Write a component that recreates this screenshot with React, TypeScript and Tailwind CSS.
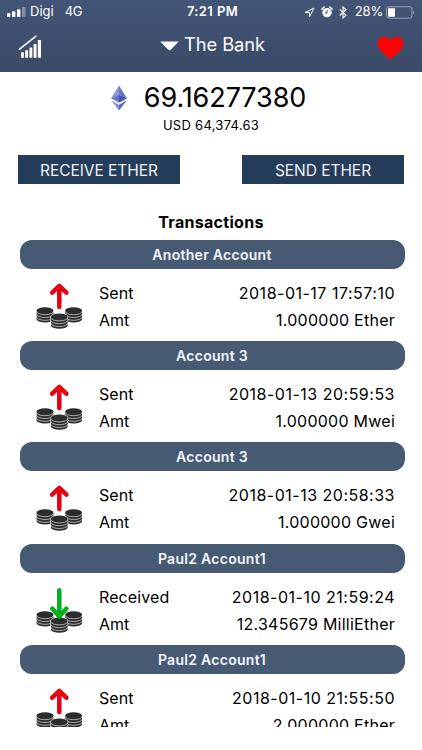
const transactions = [
  { account: 'Another Account', type: 'Sent', date: '2018-01-17 17:57:10', amount: '1.000000 Ether' },
  { account: 'Account 3', type: 'Sent', date: '2018-01-13 20:59:53', amount: '1.000000 Mwei' },
  { account: 'Account 3', type: 'Sent', date: '2018-01-13 20:58:33', amount: '1.000000 Gwei' },
  { account: 'Paul2 Account1', type: 'Received', date: '2018-01-10 21:59:24', amount: '12.345679 MilliEther' },
  { account: 'Paul2 Account1', type: 'Sent', date: '2018-01-10 21:55:50', amount: '2.000000 Ether' },
]

const StatusBar = () => {
  return (
    <div className="grid h-6 grid-cols-[1fr_auto_1fr] items-center pl-[7px] pr-[7px] text-[13px]">
      <div className="flex items-center">
        <svg width="19" height="10" viewBox="0 0 19 10" fill="#fff">
          <rect x="0" y="6" width="3.4" height="4" rx="0.8" />
          <rect x="5" y="4.3" width="3.4" height="5.7" rx="0.8" />
          <rect x="10" y="2.2" width="3.4" height="7.8" rx="0.8" />
          <rect x="15" y="0" width="3.4" height="10" rx="0.8" opacity="0.35" />
        </svg>
        <span className="ml-[4px]">Digi</span>
        <span className="ml-[11px] tracking-[-0.2px]">4G</span>
      </div>
      <span className="pl-[3px] font-semibold tracking-[0.4px]">7:21 PM</span>
      <div className="flex items-center justify-end">
        <svg width="11" height="11" viewBox="0 0 11 11" fill="none" stroke="#fff" strokeWidth="1">
          <path d="M10 1 L1 5.5 H5.4 V10 Z" strokeLinejoin="round" />
        </svg>
        <svg className="ml-[6px]" width="12" height="12" viewBox="0 0 12 12">
          <circle cx="6" cy="6.6" r="4.7" fill="#fff" />
          <path d="M0.8 3.3 L3.2 1 M11.2 3.3 L8.8 1" stroke="#fff" strokeWidth="1.5" strokeLinecap="round" />
          <path d="M6 4 V7 H4" fill="none" stroke="#40506f" strokeWidth="1" />
        </svg>
        <svg className="ml-[6px]" width="8" height="13" viewBox="0 0 8 13" fill="none" stroke="#fff" strokeWidth="1.1">
          <path d="M0.7 3.5 L7 9.3 L4 12 V1 L7 3.7 L0.7 9.5" />
        </svg>
        <span className="ml-[8px] tracking-[-0.2px]">28%</span>
        <svg className="ml-[3px]" width="29" height="13" viewBox="0 0 29 13">
          <rect x="0.5" y="0.7" width="25.5" height="11.5" rx="2.6" fill="none" stroke="#fff" strokeOpacity="0.45" />
          <rect x="2" y="2.2" width="7" height="8.5" rx="0.8" fill="#fff" />
          <path d="M27.2 4.6 Q29 6.5 27.2 8.5 Z" fill="#fff" fillOpacity="0.5" />
        </svg>
      </div>
    </div>
  )
}

const ChartIcon = () => {
  return (
    <svg width="24" height="24" viewBox="0 0 24 24" fill="#fff">
      <path d="M1.5 14.2 L18 1.2" stroke="#fff" strokeWidth="1.5" strokeLinecap="round" />
      <rect x="3" y="17.2" width="2.9" height="5.5" rx="0.5" />
      <rect x="7.2" y="15.2" width="2.9" height="7.5" rx="0.5" />
      <rect x="11.4" y="12.4" width="2.9" height="10.3" rx="0.5" />
      <rect x="15.6" y="9" width="2.9" height="13.7" rx="0.5" />
      <rect x="19.8" y="5" width="3.2" height="17.7" rx="0.5" />
    </svg>
  )
}

const HeartIcon = () => {
  return (
    <svg width="27" height="24" viewBox="0 0 27 24" fill="#fe0000">
      <path d="M13.5 23.3 C11.5 21.5 8.5 19.7 5 16 C2 13 0.5 10.5 0.5 7.2 C0.5 3.5 3.2 0.7 7 0.7 C9.8 0.7 12.2 1.8 13.5 4 C14.8 1.8 17.2 0.7 20 0.7 C23.8 0.7 26.5 3.5 26.5 7.2 C26.5 10.5 25 13 22 16 C18.5 19.7 15.5 21.5 13.5 23.3 Z" />
    </svg>
  )
}

const EtherIcon = () => {
  return (
    <svg width="18" height="26" viewBox="0 0 18 26">
      <path d="M9 0.5 L1 13.3 L9 9.8 Z" fill="#8a97dc" />
      <path d="M9 0.5 L17 13.3 L9 9.8 Z" fill="#6475c6" />
      <path d="M1 13.3 L9 9.8 V17.8 Z" fill="#6575c8" />
      <path d="M17 13.3 L9 9.8 V17.8 Z" fill="#4253ad" />
      <path d="M1 15.2 L9 19.8 V25.5 Z" fill="#8794dc" />
      <path d="M17 15.2 L9 19.8 V25.5 Z" fill="#5969bf" />
    </svg>
  )
}

const CoinStack = ({ x, y }: { x: number; y: number }) => {
  return (
    <g transform={`translate(${x} ${y})`}>
      {/* white rim keeps the front stack apart from the ones behind */}
      <path d="M-8.8 0 V9.3 A8.8 3.9 0 0 0 8.8 9.3 V0 A8.8 3.9 0 0 0 -8.8 0 Z" fill="#fff" />
      <path d="M-8.4 0 V8.6 A8.4 3.4 0 0 0 8.4 8.6 V0 A8.4 3.4 0 0 0 -8.4 0 Z" fill="#2c2c2c" />
      <g fill="none" stroke="#fff" strokeWidth="0.6">
        <path d="M-8.6 0.6 A8.6 3.5 0 0 0 8.6 0.6" />
        <path d="M-8.6 3.4 A8.6 3.5 0 0 0 8.6 3.4" />
        <path d="M-8.6 6.2 A8.6 3.5 0 0 0 8.6 6.2" />
      </g>
    </g>
  )
}

const CoinsIcon = ({ received }: { received: boolean }) => {
  return (
    <svg className="shrink-0" width="48" height="48" viewBox="0 0 48 48">
      <CoinStack x={9} y={29.6} />
      <CoinStack x={37.6} y={29.6} />
      <CoinStack x={23.3} y={35.8} />
      <path
        d={received ? 'M23.3 5.2 V31 M16.2 23.6 L23.3 31.4 L30.4 23.6' : 'M23.3 26 V6 M16.2 11.6 L23.3 4.9 L30.4 11.6'}
        fill="none"
        stroke={received ? '#00b11c' : '#e60012'}
        strokeWidth="4.5"
        strokeLinecap="round"
        strokeLinejoin="round"
      />
    </svg>
  )
}

export default function App() {
  return (
    <div className="flex h-[750px] w-[422px] flex-col overflow-hidden bg-white font-['Inter',sans-serif] text-black">
      <header className="h-[72px] shrink-0 bg-linear-to-b from-[#435576] to-[#3a4a68] text-white">
        <StatusBar />
        <div className="grid h-12 grid-cols-[1fr_auto_1fr] items-center px-[18px]">
          <div className="pb-0.5">
            <ChartIcon />
          </div>
          <div className="flex items-center pb-[8px] pl-[3px]">
            <svg className="mt-[3px]" width="19" height="10" viewBox="0 0 19 10" fill="#fff">
              <path d="M0.3 0.5 H18.7 L11 8.6 Q9.5 10 8 8.6 Z" />
            </svg>
            <span className="ml-[5px] text-[18.3px] leading-6 tracking-[-0.05px]">The Bank</span>
          </div>
          <div className="flex justify-end">
            <HeartIcon />
          </div>
        </div>
      </header>

      <section className="shrink-0 pt-[10px]">
        <div className="flex h-8 items-center justify-center pr-[6px]">
          <EtherIcon />
          <span className="ml-[16px] text-[27px] leading-8 tracking-[-0.1px]">69.16277380</span>
        </div>
        <p className="mt-px text-center text-[13px] leading-5 tracking-[0.28px]">USD 64,374.63</p>
      </section>

      <div className="mt-5 flex shrink-0 justify-between px-[18px] text-[15.5px] text-[#eef2f8]">
        <button className="h-[29px] w-[162px] bg-[#263c5b] pt-0.5 tracking-[-0.05px]">RECEIVE ETHER</button>
        <button className="h-[29px] w-[162px] bg-[#263c5b] pt-0.5 tracking-[-0.05px]">SEND ETHER</button>
      </div>

      <h2 className="mt-[26px] h-6 shrink-0 text-center text-[16px] font-bold leading-6 tracking-[0.3px]">Transactions</h2>

      <ul className="mt-[6.1px] h-[486.9px] shrink-0 overflow-hidden pl-[19.5px] pr-[17.5px]">
        {transactions.map((tx, i) => (
          <li key={i} className="h-[101.15px]">
            <div className="flex h-[29px] items-center justify-center rounded-[12px] bg-[#475a74] text-[14px] font-semibold tracking-[0.28px] text-[#f3f6fa]">
              {tx.account}
            </div>
            <div className="flex pl-[16.5px] pr-[9.5px]">
              <div className="pt-[12px]">
                <CoinsIcon received={tx.type === 'Received'} />
              </div>
              <div className="ml-[15px] grow pt-[11px] text-[16px] leading-[27px]">
                <p className="flex justify-between">
                  <span className="tracking-[0.1px]">{tx.type}</span>
                  <span className="tracking-[0.5px]">{tx.date}</span>
                </p>
                <p className="flex justify-between">
                  <span>Amt</span>
                  <span className="tracking-[0.25px]">{tx.amount}</span>
                </p>
              </div>
            </div>
          </li>
        ))}
      </ul>
    </div>
  )
}
